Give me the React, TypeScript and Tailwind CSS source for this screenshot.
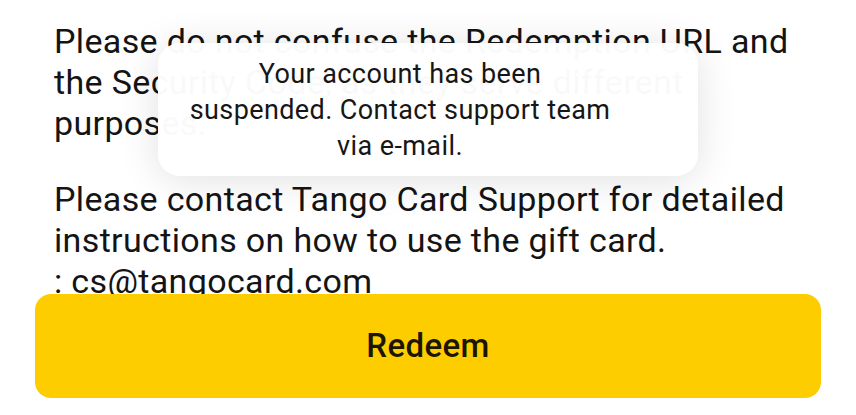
export default function App() {
  return (
    <div className="relative flex h-[415px] w-[856px] flex-col overflow-hidden bg-white font-['Roboto',sans-serif]">
      <div className="h-[294px] shrink-0 overflow-hidden pl-[54px] pr-[46px] pt-[21px] text-[34px] leading-[41px] tracking-[0.35px] text-[#141414]">
        <p>Please do not confuse the Redemption URL and the Security Code, as they serve different purposes.</p>
        <p className="mt-[35px]">
          Please contact Tango Card Support for detailed instructions on how to use the gift card.
          <br />: cs@tangocard.com
        </p>
      </div>
      <button
        type="button"
        className="mx-[35px] flex h-[104px] shrink-0 items-center justify-center rounded-[16px] bg-[#fecd00] text-[33px] font-medium tracking-[0.4px] text-[#1c1600]"
      >
        Redeem
      </button>

      <div className="absolute left-[158px] top-[43px] flex h-[133px] w-[540px] flex-col items-center justify-center rounded-[22px] bg-white/[0.975] pr-[56px] text-center text-[27px] leading-[36px] tracking-[0.4px] text-[#161616] shadow-[0_4px_40px_rgba(0,0,0,0.12)]">
        <span>Your account has been</span>
        <span>suspended. Contact support team</span>
        <span>via e-mail.</span>
      </div>
    </div>
  );
}
